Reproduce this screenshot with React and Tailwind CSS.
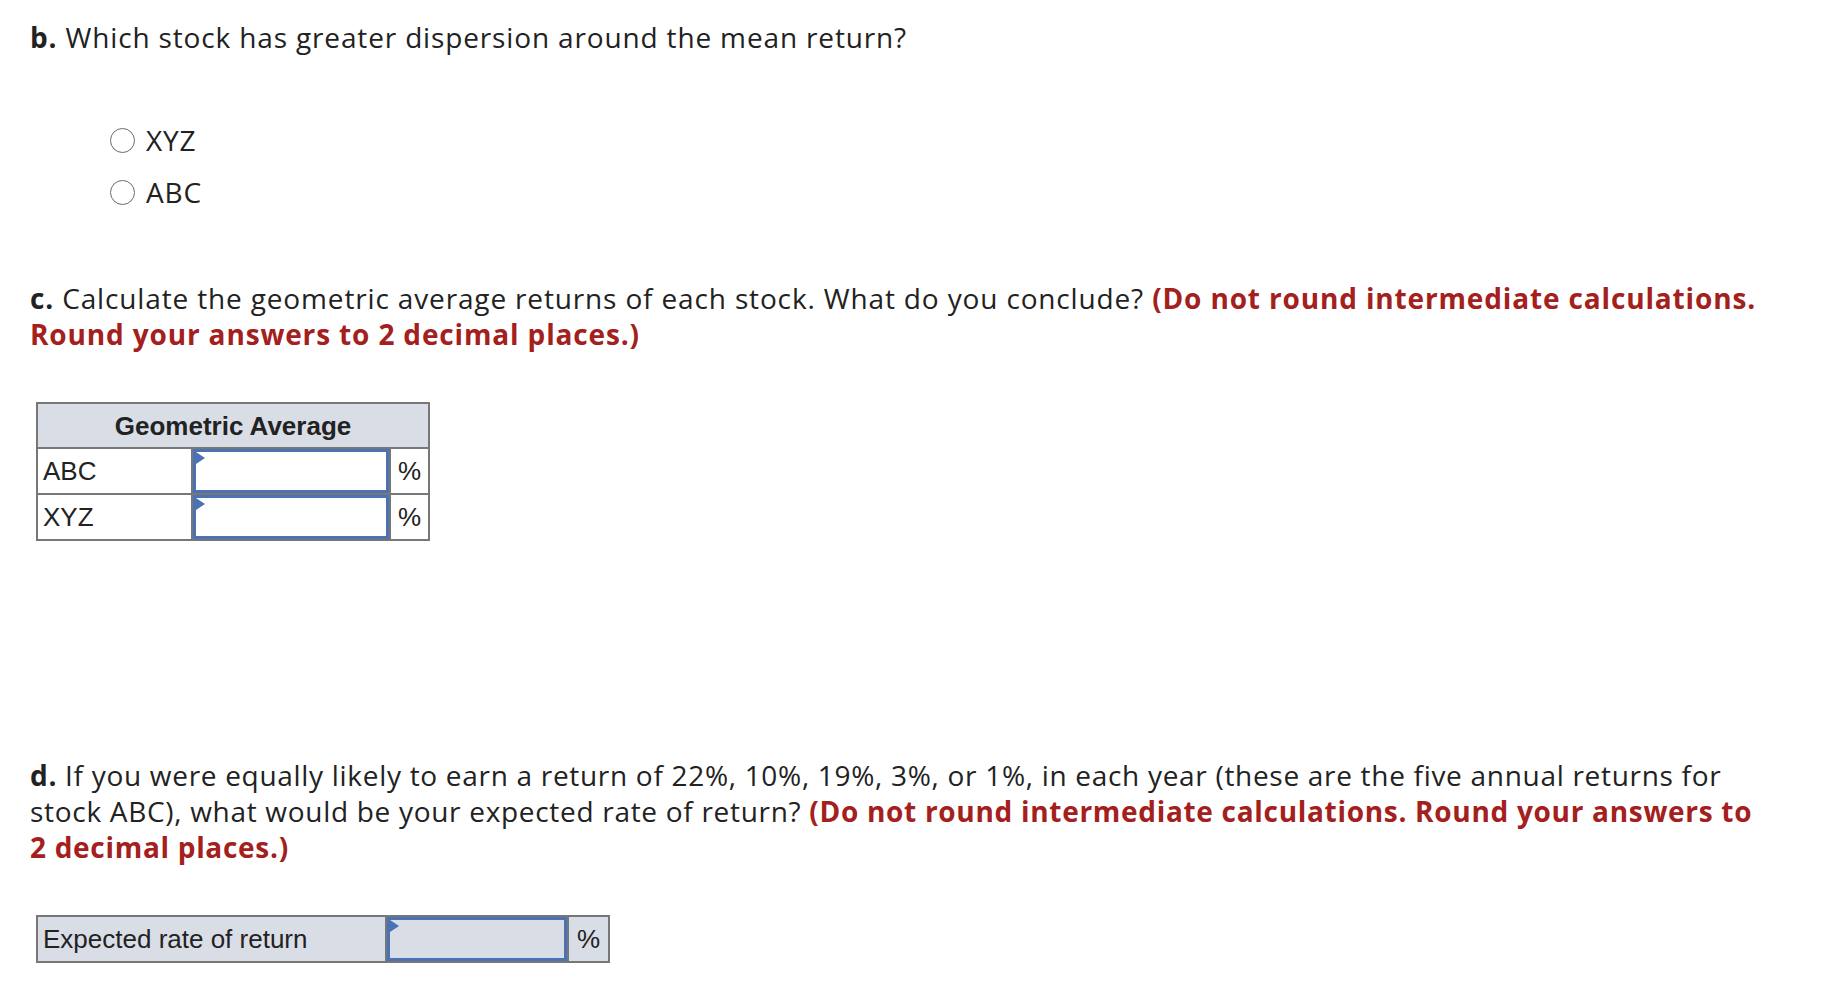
import React from "react";

const Radio = ({ label }) => (
  <label className="flex items-center h-[52px]">
    <span className="w-[25px] h-[25px] rounded-full border-[1.5px] border-[#6b6b6b] bg-white" />
    <span className="ml-[11px]">{label}</span>
  </label>
);

const AnswerBox = ({ bg = "bg-white" }) => (
  <div className={`relative h-full w-full border-[3px] border-[#4a72b5] ${bg}`}>
    <span className="absolute left-0 top-0 w-0 h-0 border-y-[6px] border-y-transparent border-l-[9px] border-l-[#4a72b5]" />
  </div>
);

export default function App() {
  return (
    <div
      className="min-h-screen bg-white text-[#222] px-[30px] pt-[19px] text-[28px] leading-[36px] tracking-[0.85px]"
      style={{ fontFamily: '"Open Sans", "Liberation Sans", sans-serif' }}
    >
      {/* Part b */}
      <p>
        <b>b.</b> Which stock has greater dispersion around the mean return?
      </p>
      <div className="ml-[80px] mt-[59px]">
        <Radio label="XYZ" />
        <Radio label="ABC" />
      </div>

      {/* Part c */}
      <p className="mt-[62px]">
        <b>c.</b> Calculate the geometric average returns of each stock. What do you conclude?{" "}
        <b className="text-[#a3201d]">
          (Do not round intermediate calculations.
          <br />
          Round your answers to 2 decimal places.)
        </b>
      </p>

      <table
        className="mt-[50px] ml-[6px] border-collapse text-[26px] tracking-normal"
        style={{ fontFamily: '"Liberation Sans", Arial, sans-serif' }}
      >
        <thead>
          <tr className="h-[45px] bg-[#d9dde6]">
            <th colSpan={3} className="border-2 border-[#777] font-bold text-center">
              Geometric Average
            </th>
          </tr>
        </thead>
        <tbody>
          {["ABC", "XYZ"].map((s) => (
            <tr key={s} className="h-[46px]">
              <td className="w-[155px] border-2 border-[#777] px-[5px]">{s}</td>
              <td className="w-[198px] h-[46px] border-2 border-[#777] p-0">
                <AnswerBox />
              </td>
              <td className="w-[39px] border-2 border-[#777] text-center">%</td>
            </tr>
          ))}
        </tbody>
      </table>

      {/* Part d */}
      <p className="mt-[216px] tracking-[0.7px]">
        <b>d.</b> If you were equally likely to earn a return of 22%, 10%, 19%, 3%, or 1%, in each year (these are the five annual returns for
        <br />
        stock ABC), what would be your expected rate of return?{" "}
        <b className="text-[#a3201d]">
          (Do not round intermediate calculations. Round your answers to
          <br />
          2 decimal places.)
        </b>
      </p>

      <table
        className="mt-[50px] ml-[6px] border-collapse text-[26px] tracking-normal bg-[#d9dde6]"
        style={{ fontFamily: '"Liberation Sans", Arial, sans-serif' }}
      >
        <tbody>
          <tr className="h-[46px]">
            <td className="w-[349px] border-2 border-[#777] px-[5px]">Expected rate of return</td>
            <td className="w-[182px] h-[46px] border-2 border-[#777] p-0">
              <AnswerBox bg="bg-[#d9dde6]" />
            </td>
            <td className="w-[41px] border-2 border-[#777] text-center">%</td>
          </tr>
        </tbody>
      </table>
    </div>
  );
}
